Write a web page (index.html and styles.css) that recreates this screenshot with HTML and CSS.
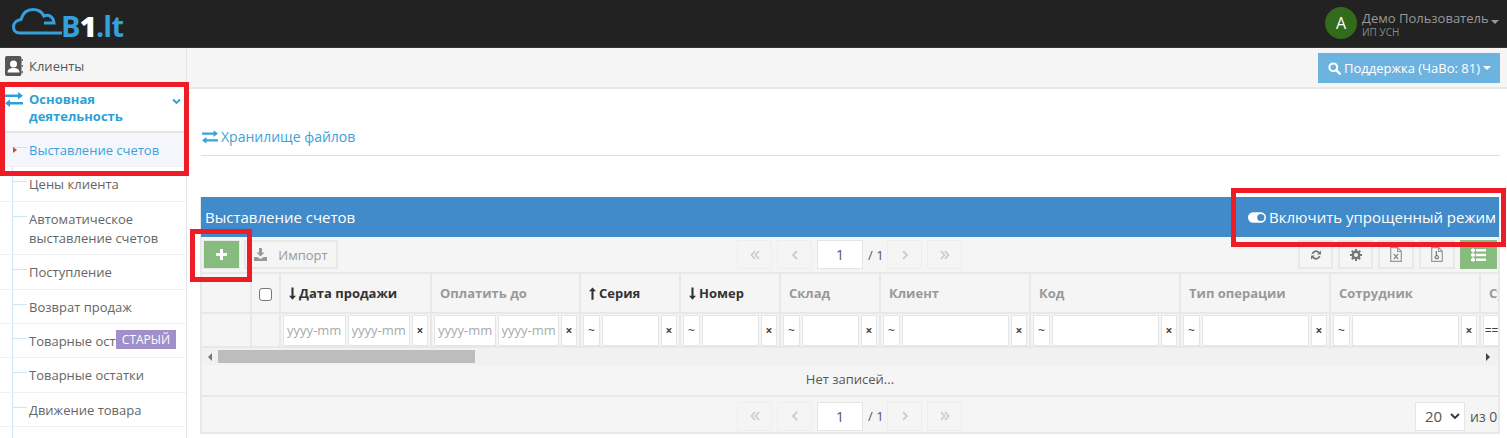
FILE: index.html
```html
<!DOCTYPE html>
<html lang="ru">
<head>
<meta charset="utf-8">
<title>B1.lt</title>
<link rel="stylesheet" href="styles.css">
</head>
<body>
<svg class="defs" width="0" height="0">
  <symbol id="ex" viewBox="0 0 18 15"><path d="M0 2.500h13V0l5 3.700-5 3.800V5H0zM18 10H5V7.500L0 11.200 5 15v-2.500h13z"/></symbol>
  <symbol id="dn" viewBox="0 0 8 14"><path d="M2.800 0h2.400v9.500H8L4 14 0 9.500h2.800z"/></symbol>
  <symbol id="up" viewBox="0 0 8 14"><path d="M2.800 14h2.400V4.500H8L4 0 0 4.500h2.800z"/></symbol>
  <symbol id="dbl-l" viewBox="0 0 10 10"><path d="M5 1 1.500 5 5 9M9 1 5.500 5 9 9" fill="none" stroke="currentColor" stroke-width="1.800"/></symbol>
  <symbol id="dbl-r" viewBox="0 0 10 10"><path d="M1 1l3.500 4L1 9M5 1l3.500 4L5 9" fill="none" stroke="currentColor" stroke-width="1.800"/></symbol>
  <symbol id="l" viewBox="0 0 10 10"><path d="M7 1 3 5l4 4" fill="none" stroke="currentColor" stroke-width="1.800"/></symbol>
  <symbol id="r" viewBox="0 0 10 10"><path d="M3 1l4 4-4 4" fill="none" stroke="currentColor" stroke-width="1.800"/></symbol>
</svg>

<header class="topbar">
  <div class="logo">
    <svg class="cloud" width="52" height="27" viewBox="0 0 52 27"><path d="M50 25H8C3 25 1.500 21.500 1.500 19 1.500 14.500 5 12 9 11.500 11 4.500 16 1.500 21 1.500c5 0 9 2.500 11 6.500 5-2 9.500 1 10 7H32" fill="none" stroke="#35a0dc" stroke-width="3"/></svg>
    <span class="logo-text">B<b>1</b>.lt</span>
  </div>
  <div class="user">
    <div class="avatar">A</div>
    <div class="user-text">
      <div class="user-name">Демо Пользователь<i class="caret"></i></div>
      <div class="user-sub">ИП УСН</div>
    </div>
  </div>
</header>

<div class="main">
  <aside class="sidebar">
    <div class="side-top">
      <svg width="18" height="20" viewBox="0 0 18 20"><rect x="0" y="0" width="16.500" height="20" rx="2" fill="#555"/><path d="M16.500 3h1.500v2h-1.500zM16.500 9h1.500v2h-1.500zM16.500 15h1.500v2h-1.500z" fill="#777"/><circle cx="8.500" cy="8" r="3.500" fill="#fff"/><path d="M2.500 16.500c0-3.500 3-4.500 6-4.500s6 1 6 4.500z" fill="#fff"/></svg>
      <span>Клиенты</span>
    </div>
    <div class="side-group">
      <svg class="ex-ico" width="18" height="15"><use href="#ex"/></svg>
      <span class="group-title">Основная деятельность</span>
      <svg class="chev" width="9" height="7" viewBox="0 0 9 7"><path d="M1 1.500l3.500 3.500L8 1.500" fill="none" stroke="#2f9fd8" stroke-width="1.800"/></svg>
    </div>
    <nav class="tree">
      <a class="tree-item active"><i class="marker"></i>Выставление счетов</a>
      <a class="tree-item">Цены клиента</a>
      <a class="tree-item tall">Автоматическое выставление счетов</a>
      <a class="tree-item">Поступление</a>
      <a class="tree-item">Возврат продаж</a>
      <a class="tree-item">Товарные остатки<span class="badge">СТАРЫЙ</span></a>
      <a class="tree-item">Товарные остатки</a>
      <a class="tree-item">Движение товара</a>
      <a class="tree-item"></a>
    </nav>
  </aside>

  <main class="content">
    <div class="crumbbar">
      <button class="support">
        <svg width="13" height="13" viewBox="0 0 13 13"><circle cx="5.300" cy="5.300" r="3.900" fill="none" stroke="#fff" stroke-width="2"/><path d="M8.200 8.200l3.500 3.500" stroke="#fff" stroke-width="2.500" stroke-linecap="round"/></svg>
        <span>Поддержка (ЧаВо: 81)</span><i class="caret white"></i>
      </button>
    </div>
    <div class="body">
      <h1 class="page-title">
        <svg width="16" height="14" viewBox="0 0 18 15"><use href="#ex"/></svg>
        Хранилище файлов
      </h1>
      <section class="panel">
        <div class="panel-head">
          <span class="panel-title">Выставление счетов</span>
          <span class="mode">
            <svg width="18" height="11" viewBox="0 0 19 11"><rect width="19" height="11" rx="5.500" fill="#fff"/><circle cx="13.500" cy="5.500" r="3.800" fill="#428bca"/></svg>
            Включить упрощенный режим
          </span>
        </div>

        <div class="toolbar">
          <div class="tool-left">
            <button class="btn add"><svg width="11" height="11" viewBox="0 0 11 11"><path d="M4 0h3v4h4v3H7v4H4V7H0V4h4z" fill="#fff"/></svg></button>
            <button class="btn import">
              <svg width="13" height="13" viewBox="0 0 13 13"><path d="M5 0h3v4.500h2.500L6.500 8.500l-4-4H5z M0 9h3.500l3 2 3-2H13v4H0z" fill="#999"/></svg>
              <span>Импорт</span>
            </button>
          </div>
          <div class="pager">
            <span class="pg"><svg width="10" height="10"><use href="#dbl-l"/></svg></span>
            <span class="pg"><svg width="10" height="10"><use href="#l"/></svg></span>
            <input class="pg-input" value="1" aria-label="page">
            <span class="pg-total">/ 1</span>
            <span class="pg"><svg width="10" height="10"><use href="#r"/></svg></span>
            <span class="pg"><svg width="10" height="10"><use href="#dbl-r"/></svg></span>
          </div>
          <div class="tool-right">
            <button class="btn ico"><svg width="12" height="12" viewBox="0 0 12 12"><path d="M1.500 5a4.600 4.600 0 0 1 8-2l1.500-1.500V5.500H7l1.300-1.300A2.900 2.900 0 0 0 3.300 5zM10.500 7a4.600 4.600 0 0 1-8 2L1 10.500V6.500h4L3.700 7.800A2.900 2.900 0 0 0 8.700 7z" fill="#777"/></svg></button>
            <button class="btn ico"><svg width="12" height="12" viewBox="0 0 12 12"><circle cx="6" cy="6" r="3.200" fill="none" stroke="#777" stroke-width="2.400"/><path d="M6 0v2.500M6 9.500V12M0 6h2.500M9.500 6H12M1.800 1.800l1.700 1.700M8.500 8.500l1.700 1.700M1.800 10.200l1.700-1.700M8.500 3.500l1.700-1.700" stroke="#777" stroke-width="2"/></svg></button>
            <button class="btn ico wide"><svg width="12" height="15" viewBox="0 0 12 15"><path d="M.7.700h7l3.600 3.600v10H.7z M7.500.700v3.800h3.800" fill="#f5f5f5" stroke="#999" stroke-width="1.200"/><path d="M3.800 7l4.400 5M8.200 7l-4.400 5" stroke="#888" stroke-width="1.200"/></svg></button>
            <button class="btn ico wide"><svg width="12" height="15" viewBox="0 0 12 15"><path d="M.7.700h7l3.600 3.600v10H.7z M7.500.700v3.800h3.800" fill="#f5f5f5" stroke="#999" stroke-width="1.200"/><path d="M5.300 4v4.500M6 8c-1.500 1-2.500 2-1.500 3s3 .6 3-.5-1-1.800-1.500-2.500" fill="none" stroke="#777" stroke-width="1.200"/></svg></button>
            <button class="btn ico green"><svg width="15" height="14" viewBox="0 0 15 14"><path d="M5 1h10v2.600H5zM5 5.700h10v2.600H5zM5 10.400h10V13H5z M1.500 0h1v14h-1z M0 1h4v2.500H0zM0 5.800h4v2.500H0zM0 10.500h4V13H0z" fill="#fff"/></svg></button>
          </div>
        </div>

        <div class="table-wrap">
          <table class="grid">
            <colgroup>
              <col class="c50"><col class="c29"><col class="c151"><col class="c149">
              <col class="c100"><col class="c100"><col class="c100">
              <col class="c150"><col class="c150"><col class="c150"><col class="c150"><col class="c100">
            </colgroup>
            <thead>
              <tr class="head-row">
                <th></th>
                <th class="center"><span class="check"></span></th>
                <th class="on"><svg class="sort" width="7" height="13"><use href="#dn"/></svg>Дата продажи</th>
                <th>Оплатить до</th>
                <th class="on"><svg class="sort" width="7" height="13"><use href="#up"/></svg>Серия</th>
                <th class="on"><svg class="sort" width="7" height="13"><use href="#dn"/></svg>Номер</th>
                <th>Склад</th>
                <th>Клиент</th>
                <th>Код</th>
                <th>Тип операции</th>
                <th>Сотрудник</th>
                <th>Сумма</th>
              </tr>
              <tr class="filter-row">
                <td></td><td></td>
                <td><div class="f"><input class="in date" placeholder="yyyy-mm"><input class="in date" placeholder="yyyy-mm"><span class="sq x">×</span></div></td>
                <td><div class="f"><input class="in date" placeholder="yyyy-mm"><input class="in date" placeholder="yyyy-mm"><span class="sq x">×</span></div></td>
                <td><div class="f"><span class="sq t">~</span><input class="in"><span class="sq x">×</span></div></td>
                <td><div class="f"><span class="sq t">~</span><input class="in"><span class="sq x">×</span></div></td>
                <td><div class="f"><span class="sq t">~</span><input class="in"><span class="sq x">×</span></div></td>
                <td><div class="f"><span class="sq t">~</span><input class="in"><span class="sq x">×</span></div></td>
                <td><div class="f"><span class="sq t">~</span><input class="in"><span class="sq x">×</span></div></td>
                <td><div class="f"><span class="sq t">~</span><input class="in"><span class="sq x">×</span></div></td>
                <td><div class="f"><span class="sq t">~</span><input class="in"><span class="sq x">×</span></div></td>
                <td><div class="f"><span class="sq t">==</span><input class="in"><span class="sq x">×</span></div></td>
              </tr>
            </thead>
          </table>
        </div>

        <div class="scrollbar">
          <i class="arr-l"></i>
          <div class="scroll-track"><div class="thumb"></div></div>
          <i class="arr-r"></i>
        </div>
        <div class="empty">Нет записей...</div>

        <div class="toolbar footer">
          <div></div>
          <div class="pager">
            <span class="pg"><svg width="10" height="10"><use href="#dbl-l"/></svg></span>
            <span class="pg"><svg width="10" height="10"><use href="#l"/></svg></span>
            <input class="pg-input" value="1" aria-label="page">
            <span class="pg-total">/ 1</span>
            <span class="pg"><svg width="10" height="10"><use href="#r"/></svg></span>
            <span class="pg"><svg width="10" height="10"><use href="#dbl-r"/></svg></span>
          </div>
          <div class="tool-right size">
            <span class="select">20<svg width="10" height="7" viewBox="0 0 10 7"><path d="M1 1l4 4 4-4" fill="none" stroke="#333" stroke-width="1.800"/></svg></span>
            <span class="of">из 0</span>
          </div>
        </div>
      </section>
    </div>
  </main>
</div>

<div class="mark mark-a"></div>
<div class="mark mark-b"></div>
<div class="mark mark-c"></div>
</body>
</html>
```
FILE: styles.css
```css
* { box-sizing: border-box; }
html, body { margin: 0; height: 438px; overflow: hidden; background: #fff; }
body { font: 14px "Open Sans", "Liberation Sans", sans-serif; color: #555; position: relative; }
.defs { position: absolute; }
button { font: inherit; }

.topbar { height: 48px; background: #222; display: flex; justify-content: space-between; align-items: center; border-bottom: 1px solid #333; }
.logo { display: flex; align-items: flex-start; height: 48px; padding: 8px 0 0 12px; }
.cloud { display: block; }
.logo-text { font: 700 29px/1 "Open Sans", sans-serif; color: #35a0dc; margin: 3px 0 0 -3px; letter-spacing: -.8px; }
.logo-text b { color: #fff; }

.user { display: flex; align-items: center; height: 48px; margin-top: -2px; padding-right: 2px; }
.avatar { width: 32px; height: 32px; border-radius: 50%; background: #336b1c; color: #fff; font-size: 16px; line-height: 32px; text-align: center; }
.user-text { padding-left: 5px; width: 148px; padding-top: 4px; }
.user-name { font-size: 13px; line-height: 16px; color: #999; white-space: nowrap; }
.user-sub { font-size: 10px; line-height: 13px; color: #888; }
.caret { display: inline-block; width: 0; height: 0; border: 4px solid transparent; border-top-color: #999; border-bottom-width: 0; margin-left: 2px; vertical-align: -1px; }
.caret.white { border-top-color: #fff; margin-left: 0; vertical-align: 0; }

.main { display: flex; height: 390px; }
.sidebar { width: 187px; flex: none; border-right: 1px solid #e5e5e5; overflow: hidden; }
.side-top { height: 35px; background: #f5f5f5; display: flex; align-items: center; gap: 6px; padding-left: 5px; font-size: 13px; color: #585858; }
.side-group { height: 50px; display: flex; align-items: flex-start; padding: 8px 0 0 5px; border-bottom: 2px solid #e5e5e5; color: #2f9fd8; position: relative; }
.ex-ico { fill: #2f9fd8; flex: none; margin-top: 1px; }
.group-title { font-weight: 700; font-size: 13px; line-height: 17px; width: 120px; margin-left: 6px; }
.chev { position: absolute; right: 5px; top: 15px; }

.tree { position: relative; }
.tree::before { content: ""; position: absolute; left: 12px; top: 0; bottom: 0; width: 1px; background: #cfe6f7; }
.tree-item { display: block; position: relative; height: 34.400px; padding: 8px 4px 0 29px; font-size: 13px; line-height: 19px; color: #666; border-bottom: 1px solid #f1f1f1; }
.tree-item.tall { height: 53.500px; }
.tree-item::before { content: ""; position: absolute; left: 12px; top: 14px; width: 15px; height: 1px; background: #cfe6f7; }
.tree-item.active { background: #f4f6fb; color: #38a3dc; }
.marker { position: absolute; left: 13px; top: 14px; border: 3.500px solid transparent; border-left: 4px solid #c0513a; border-right-width: 0; }
.badge { position: absolute; left: 116px; top: 6px; width: 60px; height: 19px; background: #a08fc9; color: #fff; font-size: 12px; line-height: 19px; text-align: center; }

.content { flex: 1; min-width: 0; }
.crumbbar { height: 41px; background: #f5f5f5; border-bottom: 2px solid #e8e8e8; display: flex; justify-content: flex-end; padding: 5px 7px 0 0; }
.support { height: 30px; width: 182px; border: 0; background: #6cb3e0; color: #fff; font-size: 13px; padding: 0 0 0 1px; display: flex; align-items: center; justify-content: center; gap: 3px; }
.body { padding: 39px 7px 0 14px; }
.page-title { margin: 0; height: 28px; border-bottom: 1px solid #ddd; font-size: 14px; font-weight: 400; color: #38a3dc; display: flex; align-items: flex-start; gap: 3px; line-height: 18px; fill: #38a3dc; }
.page-title svg { margin-top: 2px; margin-left: 1px; }
.panel { margin: 41px 0 0 -1px; border: 2px solid #e8e8e8; border-top: 0; background: #f5f5f5; width: 1300px; height: 237px; }
.panel-head { height: 40px; background: #428bca; margin: 0 -1px; display: flex; align-items: center; justify-content: space-between; color: #fff; padding: 0 3px 0 4px; }
.panel-title { font-size: 15px; }
.mode { font-size: 15px; display: flex; align-items: center; gap: 3px; }

.toolbar { height: 35px; display: grid; grid-template-columns: 1fr auto 1fr; align-items: center; padding: 0 2px 0 1px; }
.tool-left { display: flex; gap: 4px; }
.tool-right { display: flex; gap: 5px; justify-content: flex-end; margin-right: -1px; }
.btn { height: 29px; border: 2px solid #e8e8e8; background: #f5f5f5; padding: 0; display: flex; align-items: center; justify-content: center; color: #999; font-size: 13px; }
.btn.add { width: 37px; background: #88bb7e; border-width: 1px; }
.btn.import { width: 94px; gap: 11px; }
.btn.ico { width: 35px; }
.btn.wide { width: 36px; }
.btn.green { width: 37px; background: #88bb7e; border-color: #88bb7e; }
.pager { display: flex; align-items: center; gap: 5px; color: #555; }
.pg { width: 35px; height: 29px; border: 1px solid #eee; display: flex; align-items: center; justify-content: center; color: #ccc; }
.pg-input { width: 46px; height: 29px; border: 1px solid #e5e5e5; background: #fff; text-align: center; font: 14px "Open Sans", sans-serif; color: #555; padding: 0; }
.pg-total { font-size: 13px; width: 14px; white-space: nowrap; }

.table-wrap { overflow: hidden; }
.grid { border-collapse: collapse; table-layout: fixed; width: 1379px; margin-left: -1px; }
.c50 { width: 50px; } .c29 { width: 29px; } .c151 { width: 151px; } .c149 { width: 149px; }
.c100 { width: 100px; } .c150 { width: 150px; }
.grid th, .grid td { border: 2px solid #e8e8e8; padding: 0; }
.grid tr > :first-child { border-left: 0; }
.head-row th { height: 40px; text-align: left; padding-left: 8px; font-size: 13px; font-weight: 700; color: #999; white-space: nowrap; overflow: hidden; }
.head-row th.on { color: #333; }
.head-row th.center { padding: 0; text-align: center; }
.sort { fill: #333; margin-right: 3px; vertical-align: -2px; }
.check { display: inline-block; width: 13px; height: 13px; border: 1px solid #777; border-radius: 3px; background: #fff; vertical-align: middle; }
.filter-row td { height: 34px; }
.f { display: flex; gap: 2px; padding: 0 2px; height: 31px; align-items: stretch; }
.in { flex: 1; min-width: 0; width: 0; height: 31px; border: 1px solid #e5e5e5; background: #fff; padding: 0 3px; font: 13px "Open Sans", sans-serif; }
.in::placeholder { color: #aaa; opacity: 1; }
.sq { flex: none; width: 16px; background: #fff; border: 1px solid #e5e5e5; font-size: 12px; line-height: 29px; text-align: center; color: #444; }
.sq.x { font-weight: 700; }
.sq.t { width: 17px; overflow: hidden; }
.scrollbar { height: 17px; display: flex; align-items: center; background: #f1f1f1; }
.scroll-track { flex: 1; height: 13px; }
.thumb { width: 257px; height: 13px; margin-left: 6px; background: #bdbdbd; }
.arr-l, .arr-r { width: 0; height: 0; border: 4px solid transparent; }
.arr-l { border-right: 4px solid #777; border-left-width: 0; margin-left: 6px; }
.arr-r { border-left: 4px solid #444; border-right-width: 0; margin-right: 8px; }
.empty { height: 32px; text-align: center; font-size: 13px; line-height: 28px; color: #555; border-bottom: 2px solid #e8e8e8; }
.footer { height: 38px; }
.footer .pg { border-color: #eee; }
.size { gap: 5px; align-items: center; }
.select { width: 50px; height: 29px; background: #fff; border: 1px solid #e5e5e5; font-size: 15px; line-height: 27px; padding-left: 9px; display: flex; align-items: center; gap: 8px; color: #555; }
.of { width: 27px; font-size: 14px; color: #555; white-space: nowrap; }

.mark { position: absolute; border: 5px solid #ee1c25; pointer-events: none; }
.mark-a { left: 0; top: 82px; width: 189px; height: 94px; }
.mark-b { left: 190px; top: 229px; width: 62px; height: 53px; }
.mark-c { left: 1231px; top: 188px; width: 275px; height: 59px; }
```
